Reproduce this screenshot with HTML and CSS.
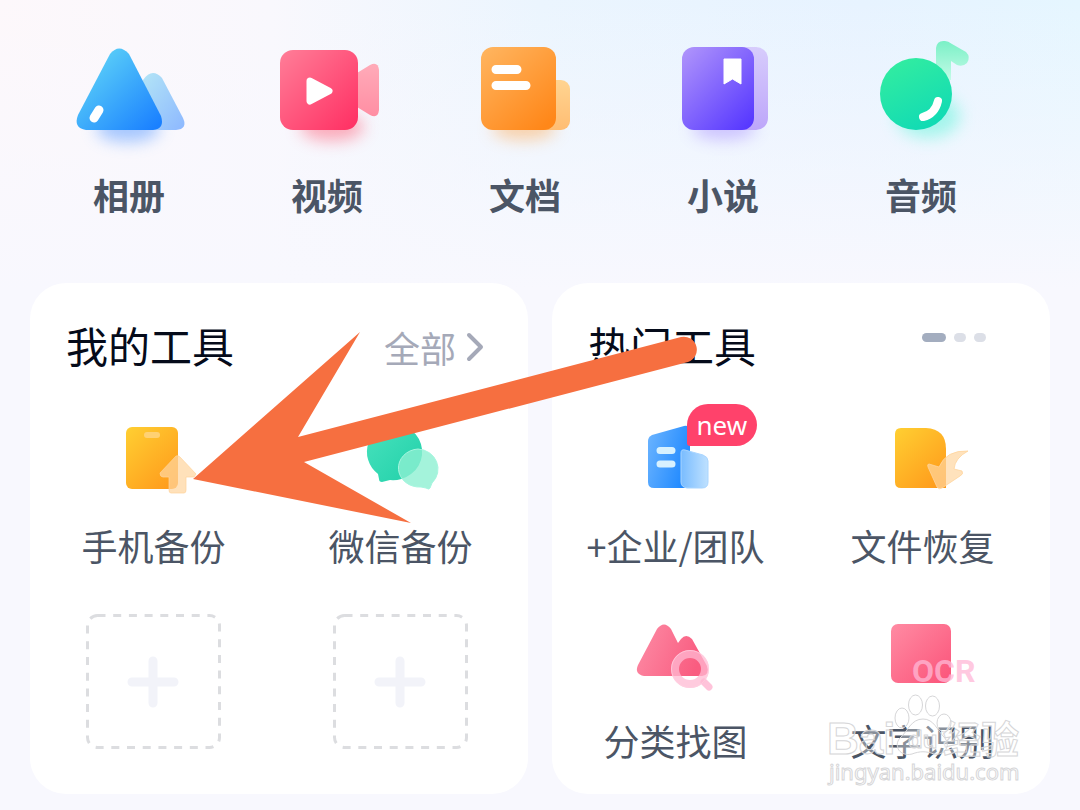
FILE: index.html
```html
<!DOCTYPE html>
<html lang="zh-CN">
<head>
<meta charset="utf-8">
<meta name="viewport" content="width=device-width, initial-scale=1">
<title>我的工具</title>
<link rel="stylesheet" href="styles.css">
</head>
<body>
<main class="page">
  <nav class="categories">
    <a class="category" href="#album">
      <svg class="category-icon" viewBox="63 30 132 132" aria-hidden="true">
        <defs>
          <linearGradient id="album" x1="0" y1="0" x2="1" y2="1"><stop offset=".15" stop-color="#5bd0f8"/><stop offset=".95" stop-color="#1a80ff"/></linearGradient>
          <linearGradient id="albumBack" x1="0" y1="0" x2="1" y2="1"><stop offset="0" stop-color="#b4e6f6"/><stop offset="1" stop-color="#8db8ff"/></linearGradient>
          <filter id="glow" x="-50%" y="-150%" width="200%" height="400%"><feGaussianBlur stdDeviation="8"/></filter>
        </defs>
        <ellipse cx="128" cy="128" rx="32" ry="14" fill="#5f9dff" opacity=".55" filter="url(#glow)"/>
        <path d="M143 80Q152 67 162 78L183 118Q188 129 176 130H140Z" fill="url(#albumBack)"/>
        <path d="M110 54Q119 43 129 54L161 116Q165 129 153 130H86Q73 128 78 115Z" fill="url(#album)"/>
        <path d="M99 110L94 118" stroke="#fff" stroke-width="9" stroke-linecap="round"/>
      </svg>
      <span class="category-name">相册</span>
    </a>
    <a class="category" href="#video">
      <svg class="category-icon" viewBox="261 30 132 132" aria-hidden="true">
        <defs>
          <linearGradient id="video" x1="0" y1="0" x2="1" y2="1"><stop offset="0" stop-color="#ff7e98"/><stop offset="1" stop-color="#ff2e62"/></linearGradient>
          <linearGradient id="videoBack" x1="0" y1="0" x2="0" y2="1"><stop offset="0" stop-color="#ffabb9"/><stop offset="1" stop-color="#ff8ea3"/></linearGradient>
        </defs>
        <ellipse cx="332" cy="127" rx="32" ry="14" fill="#ff5f78" opacity=".5" filter="url(#glow)"/>
        <path d="M357 73L370 65Q378 61 379 70V110Q378 119 370 115L357 107Z" fill="url(#videoBack)"/>
        <rect x="280" y="50" width="78" height="80" rx="13" fill="url(#video)"/>
        <path d="M310 81L329 91L310 101Z" fill="#fff" stroke="#fff" stroke-width="7" stroke-linejoin="round"/>
      </svg>
      <span class="category-name">视频</span>
    </a>
    <a class="category" href="#docs">
      <svg class="category-icon" viewBox="459 30 132 132" aria-hidden="true">
        <defs>
          <linearGradient id="docs" x1="0" y1="0" x2=".8" y2="1"><stop offset="0" stop-color="#ffb661"/><stop offset="1" stop-color="#ff8719"/></linearGradient>
          <linearGradient id="docsBack" x1="0" y1="0" x2="0" y2="1"><stop offset="0" stop-color="#ffd491"/><stop offset="1" stop-color="#ffbd73"/></linearGradient>
        </defs>
        <ellipse cx="524" cy="128" rx="32" ry="12" fill="#ffab56" opacity=".5" filter="url(#glow)"/>
        <rect x="530" y="80" width="40" height="50" rx="9" fill="url(#docsBack)"/>
        <rect x="481" y="47" width="75" height="83" rx="12" fill="url(#docs)"/>
        <path d="M496 69.500H517M496 85.500H526" stroke="#fff" stroke-width="9" stroke-linecap="round"/>
      </svg>
      <span class="category-name">文档</span>
    </a>
    <a class="category" href="#novel">
      <svg class="category-icon" viewBox="657 30 132 132" aria-hidden="true">
        <defs>
          <linearGradient id="novel" x1="0" y1="0" x2=".9" y2="1"><stop offset="0" stop-color="#b196fb"/><stop offset="1" stop-color="#5637ff"/></linearGradient>
          <linearGradient id="novelBack" x1="0" y1="0" x2="0" y2="1"><stop offset="0" stop-color="#d7ccfc"/><stop offset="1" stop-color="#bda6fa"/></linearGradient>
        </defs>
        <ellipse cx="724" cy="128" rx="32" ry="12" fill="#a084ff" opacity=".45" filter="url(#glow)"/>
        <rect x="710" y="47" width="58" height="83" rx="12" fill="url(#novelBack)"/>
        <rect x="682" y="47" width="72" height="83" rx="12" fill="url(#novel)"/>
        <path d="M724 59H741V84L732.500 79L724 84Z" fill="#fff" stroke="#fff" stroke-linejoin="round"/>
      </svg>
      <span class="category-name">小说</span>
    </a>
    <a class="category" href="#audio">
      <svg class="category-icon" viewBox="855 30 132 132" aria-hidden="true">
        <defs>
          <linearGradient id="audio" x1=".2" y1="0" x2=".7" y2="1"><stop offset="0" stop-color="#33eda0"/><stop offset="1" stop-color="#10dab5"/></linearGradient>
          <linearGradient id="audioBack" x1="0" y1="0" x2="0" y2="1"><stop offset="0" stop-color="#7af0c6"/><stop offset="1" stop-color="#c3fbe7"/></linearGradient>
        </defs>
        <ellipse cx="928" cy="116" rx="32" ry="22" fill="#67f5dc" opacity=".55" filter="url(#glow)"/>
        <path d="M936 80V48Q937 40 945 41Q948 41 952 44L966 52Q971 57 967 63Q963 67 957 65L951 61V80Z" fill="url(#audioBack)"/>
        <circle cx="916" cy="94" r="36" fill="url(#audio)"/>
        <path d="M938 101Q935 114 923 117" fill="none" stroke="#fff" stroke-width="8" stroke-linecap="round"/>
      </svg>
      <span class="category-name">音频</span>
    </a>
  </nav>

  <div class="cards">
    <section class="card">
      <header class="card-header">
        <h2 class="card-title">我的工具</h2>
        <a class="more" href="#all">全部
          <svg class="chevron" viewBox="0 0 18 30" aria-hidden="true"><path d="M3 3L15 15L3 27" fill="none" stroke="#a5a9b8" stroke-width="4" stroke-linecap="round" stroke-linejoin="round"/></svg>
        </a>
      </header>
      <div class="tools">
        <a class="tool" href="#phone-backup">
          <svg class="tool-icon" viewBox="94 416 120 96" aria-hidden="true">
            <defs><linearGradient id="yellow" x1="0" y1="0" x2=".8" y2="1"><stop offset="0" stop-color="#ffcf32"/><stop offset="1" stop-color="#ff9c1c"/></linearGradient></defs>
            <rect x="126" y="427" width="52" height="62" rx="6" fill="url(#yellow)"/>
            <rect x="144" y="432" width="16" height="6" rx="3" fill="#ffd173"/>
            <path d="M176 456L160 473Q160 477 163 477H169V490Q169 493 171 493H184Q186 493 186 490V477H194L196 474L180 457Q178 455 176 456Z" fill="#ffd6a0" fill-opacity=".72" stroke="#ffd39a" stroke-opacity=".7"/>
          </svg>
          <span class="tool-name">手机备份</span>
        </a>
        <a class="tool" href="#wechat-backup">
          <svg class="tool-icon" viewBox="341 416 120 96" aria-hidden="true">
            <defs><linearGradient id="chat" x1="0" y1="0" x2="1" y2="1"><stop offset="0" stop-color="#49e2bd"/><stop offset="1" stop-color="#20d0a9"/></linearGradient></defs>
            <path d="M396 424A29 28 0 1 1 390 480L382 482Q379 482 379 479L378 474A29 28 0 0 1 396 424Z" fill="url(#chat)"/>
            <path d="M418 449A21 20 0 0 1 432 483L430 488Q429 490 426 488L421 487A21 19 0 1 1 418 449Z" fill="#8df0d2" fill-opacity=".8" stroke="#a6f6df"/>
          </svg>
          <span class="tool-name">微信备份</span>
        </a>
        <button class="slot" type="button" aria-label="添加工具">
          <svg class="slot-art" viewBox="0 0 136 136" aria-hidden="true"><rect x="1.500" y="1.500" width="132" height="132" rx="10" fill="none" stroke="#dcdde0" stroke-width="3" stroke-dasharray="8 7.700"/><path d="M67 47V89M46 68H88" stroke="#f2f3f9" stroke-width="9" stroke-linecap="round"/></svg>
        </button>
        <button class="slot" type="button" aria-label="添加工具">
          <svg class="slot-art" viewBox="0 0 136 136" aria-hidden="true"><rect x="1.500" y="1.500" width="132" height="132" rx="10" fill="none" stroke="#dcdde0" stroke-width="3" stroke-dasharray="8 7.700"/><path d="M67 47V89M46 68H88" stroke="#f2f3f9" stroke-width="9" stroke-linecap="round"/></svg>
        </button>
      </div>
    </section>

    <section class="card">
      <header class="card-header">
        <h2 class="card-title">热门工具</h2>
        <div class="pager"><span class="dot dot-active"></span><span class="dot"></span><span class="dot"></span></div>
      </header>
      <div class="tools">
        <a class="tool" href="#team">
          <svg class="tool-icon" viewBox="616 416 120 96" aria-hidden="true">
            <defs>
              <linearGradient id="team" x1="0" y1="0" x2="1" y2=".4"><stop offset="0" stop-color="#6db5ff"/><stop offset="1" stop-color="#238bff"/></linearGradient>
              <linearGradient id="teamBack" x1="0" y1="0" x2="1" y2="0"><stop offset="0" stop-color="#79bcff"/><stop offset="1" stop-color="#bfe1ff"/></linearGradient>
            </defs>
            <path d="M648 441Q648 437 652 435L684 426Q690 425 690 431V488H654Q648 488 648 482Z" fill="url(#team)"/>
            <path d="M660 450.500H672M660 464H672" stroke="#d7f1ff" stroke-width="7" stroke-linecap="round"/>
            <path d="M681 453Q681 449 685 450L703 455Q708 457 708 461V482Q708 488 702 488H687Q681 487 681 482Z" fill="url(#teamBack)" stroke="#a9d5ff"/>
          </svg>
          <span class="badge">new</span>
          <span class="tool-name">+企业/团队</span>
        </a>
        <a class="tool" href="#restore">
          <svg class="tool-icon" viewBox="863 416 120 96" aria-hidden="true">
            <path d="M901 428H926Q946 429 946 449V488H901Q895 488 895 482V434Q895 428 901 428Z" fill="url(#yellow)"/>
            <path d="M929 464L939 467Q946 450 968 451Q955 458 954 469L962 471Q964 474 960 476L942 488Q939 490 937 487L928 467Q927 464 929 464Z" fill="#ffd6a0" fill-opacity=".7" stroke="#ffd49c" stroke-opacity=".8"/>
          </svg>
          <span class="tool-name">文件恢复</span>
        </a>
        <a class="tool" href="#find">
          <svg class="tool-icon" viewBox="616 611 120 96" aria-hidden="true">
            <defs>
              <linearGradient id="pink" x1="0" y1="0" x2="1" y2="1"><stop offset="0" stop-color="#ff8ba3"/><stop offset="1" stop-color="#fb5379"/></linearGradient>
              <linearGradient id="hill" x1="0" y1="0" x2="1" y2=".3"><stop offset="0" stop-color="#fd8da6"/><stop offset="1" stop-color="#f95c80"/></linearGradient>
            </defs>
            <path d="M657 629Q664 620 671 629L678 643L681 639Q686 633 692 639L707 666Q710 675 702 676H644Q634 674 638 665Z" fill="url(#hill)"/>
            <path d="M704 682L709 687" stroke="#ffc3da" stroke-width="7" stroke-linecap="round"/>
            <circle cx="690" cy="669" r="15" fill="none" stroke="#ffb9d3" stroke-opacity=".75" stroke-width="8"/>
            <circle cx="690" cy="669" r="18.500" fill="none" stroke="#ffd0e1" stroke-opacity=".7"/>
          </svg>
          <span class="tool-name">分类找图</span>
        </a>
        <a class="tool" href="#ocr">
          <svg class="tool-icon" viewBox="863 611 120 96" aria-hidden="true">
            <rect x="891" y="624" width="60" height="59" rx="7" fill="url(#pink)"/>
            <text class="ocr" x="912" y="682">OCR</text>
          </svg>
          <span class="tool-name">文字识别</span>
        </a>
      </div>
    </section>
  </div>

  <svg class="arrow" viewBox="190 330 510 196" aria-hidden="true">
    <path d="M193 479L360 332L298 437L681 337A13 13 0 0 1 688 362L304 462L411 523Z" fill="#f66f40"/>
  </svg>

  <svg class="watermark" viewBox="820 690 210 100" aria-hidden="true">
    <g class="outline">
      <text class="brand" x="827" y="754">Bai</text>
      <text class="brand-cjk" x="943" y="753">经验</text>
      <ellipse cx="915.500" cy="705" rx="7" ry="10"/>
      <ellipse cx="932.500" cy="706" rx="7" ry="10"/>
      <ellipse cx="902" cy="718" rx="7" ry="10"/>
      <ellipse cx="944" cy="723" rx="7" ry="9"/>
      <path d="M923 719C934 719 937 730 944 737C952 746 944 756 934 754C926 751 920 751 912 754C900 757 893 746 900 738C908 731 911 719 923 719Z"/>
      <text class="du" x="908" y="748">du</text>
      <text class="site" x="829" y="780">jingyan.baidu.com</text>
    </g>
  </svg>
</main>
</body>
</html>
```
FILE: styles.css
```css
* { box-sizing: border-box; }

body {
  margin: 0;
  font-family: "Noto Sans CJK SC", "Noto Sans", sans-serif;
  color: #4b5565;
}

a { color: inherit; text-decoration: none; }

.page {
  position: relative;
  min-height: 100vh;
  padding: 30px 30px 16px;
  overflow: hidden;
  background:
    linear-gradient(180deg, rgba(248, 248, 254, 0) 0, #f8f8fe 290px),
    linear-gradient(90deg, #fdf8fb 0, #f9f8fd 25%, #ebf5fe 50%, #e7f3ff 80%, #e5f6ff 100%);
}

.categories {
  display: grid;
  grid-template-columns: repeat(5, 1fr);
  padding-right: 30px;
}

.category {
  display: flex;
  flex-direction: column;
  align-items: center;
}

.category-icon { width: 132px; height: 132px; }

.category-name {
  margin-top: 12px;
  font-size: 36px;
  line-height: 40px;
  font-weight: 700;
}

.cards {
  display: grid;
  grid-template-columns: 1fr 1fr;
  gap: 24px;
  margin-top: 69px;
}

.card {
  padding: 36px 0 30px;
  border-radius: 36px;
  background: #fff;
}

.card-header {
  display: flex;
  align-items: flex-start;
  justify-content: space-between;
  height: 56px;
  padding: 0 44px 0 36px;
}

.card-title {
  margin: 0;
  font-size: 42px;
  line-height: 52px;
  font-weight: 400;
  color: #050b1a;
}

.more {
  display: flex;
  align-items: center;
  gap: 10px;
  font-size: 36px;
  line-height: 56px;
  color: #a5a9b8;
}

.chevron { width: 18px; height: 30px; }

.pager {
  display: flex;
  gap: 8px;
  padding: 14px 20px 0 0;
}

.dot {
  width: 12px;
  height: 9px;
  border-radius: 5px;
  background: #dcdfe7;
}

.dot-active { width: 24px; background: #a3adbf; }

.tools {
  display: grid;
  grid-template-columns: 1fr 1fr;
  row-gap: 42px;
  margin-top: 41px;
  padding-right: 4px;
}

.tool {
  position: relative;
  display: flex;
  flex-direction: column;
  align-items: center;
  gap: 9px;
}

.tool-icon { width: 120px; height: 96px; }

.tool-name {
  font-size: 36px;
  line-height: 48px;
  white-space: nowrap;
}

.badge {
  position: absolute;
  top: -12px;
  left: calc(50% + 11px);
  padding: 0 10px;
  border-radius: 21px 21px 21px 3px;
  background: #ff426b;
  color: #fff;
  font-family: "Noto Sans", sans-serif;
  font-size: 26px;
  line-height: 42px;
}

.slot {
  justify-self: center;
  align-self: start;
  margin-top: 3px;
  padding: 0;
  border: 0;
  background: none;
}

.slot-art { display: block; width: 136px; height: 136px; }

.ocr {
  font-family: Roboto, sans-serif;
  font-size: 32px;
  font-weight: 700;
  fill: #ffb8d6;
  fill-opacity: 0.75;
}

.arrow {
  position: absolute;
  top: 330px;
  left: 190px;
  width: 510px;
  height: 196px;
  pointer-events: none;
}

.watermark {
  position: absolute;
  right: 50px;
  top: 690px;
  width: 210px;
  height: 100px;
  pointer-events: none;
}

.outline {
  fill: #fff;
  fill-opacity: 0.35;
  stroke: #d6d6d8;
  stroke-width: 1;
}

.brand {
  font-family: "Liberation Sans", sans-serif;
  font-size: 44px;
  font-weight: 700;
}

.brand-cjk {
  font-family: "Noto Sans CJK SC", sans-serif;
  font-size: 38px;
  font-weight: 700;
}

.du {
  font-family: "Liberation Sans", sans-serif;
  font-size: 24px;
  font-weight: 700;
}

.site {
  font-family: "Noto Sans", sans-serif;
  font-size: 22px;
}
```
